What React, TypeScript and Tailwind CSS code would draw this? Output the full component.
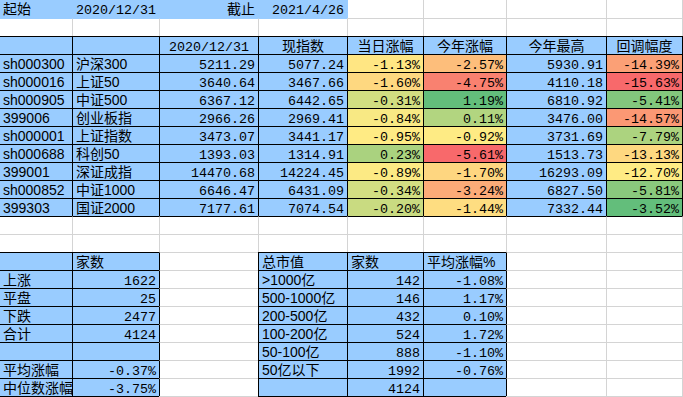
import React from 'react';

type Cell = { t?: string; a?: 'l' | 'r' | 'c'; f?: 'm' | 's'; bg?: string };

const BLUE = 'bg-[#99CCFF]';

const monoCls = "font-['Liberation_Mono','Noto_Sans_CJK_SC',monospace] text-[13.33px] leading-[13px] pt-[4px]";
const sansCls = "font-['Liberation_Sans','Noto_Sans_CJK_SC',sans-serif] text-[14px] leading-[15px] pt-[2px]";

const alignCls = { l: 'text-left', r: 'text-right', c: 'text-center' };

const topCls = {
  k: 'border-t border-t-black',
  g: 'border-t border-t-[#D4D4D4]',
  b: 'border-t border-t-[#99CCFF]',
  n: '',
};
const leftCls = {
  k: 'border-l border-l-black',
  g: 'border-l border-l-[#D4D4D4]',
  b: 'border-l border-l-[#99CCFF]',
  n: '',
};
const rightCls = {
  k: 'border-r border-r-black',
  g: 'border-r border-r-[#D4D4D4]',
  n: '',
};

const s = (t: string, a: 'l' | 'r' | 'c' = 'l', bg?: string): Cell => ({ t, a, f: 's', bg });
const m = (t: string, a: 'l' | 'r' | 'c' = 'r', bg?: string): Cell => ({ t, a, f: 'm', bg });
const e = (bg?: string): Cell => ({ bg });

const data: [string, string, string, string, string, string, string, string, string, string, string][] = [
  ['sh000300', '沪深300', '5211.29', '5077.24', '-1.13%', 'bg-[#FFE683]', '-2.57%', 'bg-[#FDBE7B]', '5930.91', '-14.39%', 'bg-[#FBA076]'],
  ['sh000016', '上证50', '3640.64', '3467.66', '-1.60%', 'bg-[#FED880]', '-4.75%', 'bg-[#F98170]', '4110.18', '-15.63%', 'bg-[#F8696B]'],
  ['sh000905', '中证500', '6367.12', '6442.65', '-0.31%', 'bg-[#D1DE81]', '1.19%', 'bg-[#63BE7B]', '6810.92', '-5.41%', 'bg-[#83C77D]'],
  ['399006', '创业板指', '2966.26', '2969.41', '-0.84%', 'bg-[#F8E984]', '0.11%', 'bg-[#B2D580]', '3476.00', '-14.57%', 'bg-[#FB9874]'],
  ['sh000001', '上证指数', '3473.07', '3441.17', '-0.95%', 'bg-[#FFEB84]', '-0.92%', 'bg-[#FEEB84]', '3731.69', '-7.79%', 'bg-[#ACD37F]'],
  ['sh000688', '科创50', '1393.03', '1314.91', '0.23%', 'bg-[#AAD27F]', '-5.61%', 'bg-[#F8696B]', '1513.73', '-13.13%', 'bg-[#FED880]'],
  ['399001', '深证成指', '14470.68', '14224.45', '-0.89%', 'bg-[#FCEA84]', '-1.70%', 'bg-[#FED680]', '16293.09', '-12.70%', 'bg-[#FFEB84]'],
  ['sh000852', '中证1000', '6646.47', '6431.09', '-0.34%', 'bg-[#D3DE82]', '-3.24%', 'bg-[#FCAB78]', '6827.50', '-5.81%', 'bg-[#8AC97D]'],
  ['399303', '国证2000', '7177.61', '7074.54', '-0.20%', 'bg-[#C9DB81]', '-1.44%', 'bg-[#FEDD81]', '7332.44', '-3.52%', 'bg-[#63BE7B]'],
];

const lower: [Cell, Cell, Cell, Cell, Cell][] = [
  [s('', 'l', BLUE), s('家数', 'l', BLUE), s('总市值', 'l', BLUE), s('家数', 'l', BLUE), s('平均涨幅%', 'l', BLUE)],
  [s('上涨', 'l', BLUE), m('1622', 'r', BLUE), s('>1000亿', 'l', BLUE), m('142', 'r', BLUE), m('-1.08%', 'r', BLUE)],
  [s('平盘', 'l', BLUE), m('25', 'r', BLUE), s('500-1000亿', 'l', BLUE), m('146', 'r', BLUE), m('1.17%', 'r', BLUE)],
  [s('下跌', 'l', BLUE), m('2477', 'r', BLUE), s('200-500亿', 'l', BLUE), m('432', 'r', BLUE), m('0.10%', 'r', BLUE)],
  [s('合计', 'l', BLUE), m('4124', 'r', BLUE), s('100-200亿', 'l', BLUE), m('524', 'r', BLUE), m('1.72%', 'r', BLUE)],
  [e(BLUE), e(BLUE), s('50-100亿', 'l', BLUE), m('888', 'r', BLUE), m('-1.10%', 'r', BLUE)],
  [s('平均涨幅', 'l', BLUE), m('-0.37%', 'r', BLUE), s('50亿以下', 'l', BLUE), m('1992', 'r', BLUE), m('-0.76%', 'r', BLUE)],
  [s('中位数涨幅', 'l', BLUE), m('-3.75%', 'r', BLUE), e(BLUE), m('4124', 'r', BLUE), e(BLUE)],
];

const rows: Cell[][] = [];
rows.push([s('起始', 'l', BLUE), m('2020/12/31', 'r', BLUE), s('截止', 'r', BLUE), m('2021/4/26', 'r', BLUE), e(), e(), e(), e()]);
rows.push([e(), e(), e(), e(), e(), e(), e(), e()]);
rows.push([
  e(BLUE),
  e(BLUE),
  m('2020/12/31', 'c', BLUE),
  s('现指数', 'c', BLUE),
  s('当日涨幅', 'c', BLUE),
  s('今年涨幅', 'c', BLUE),
  s('今年最高', 'c', BLUE),
  s('回调幅度', 'c', BLUE),
]);
for (const d of data) {
  rows.push([
    s(d[0], 'l', BLUE),
    s(d[1], 'l', BLUE),
    m(d[2], 'r', BLUE),
    m(d[3], 'r', BLUE),
    m(d[4], 'r', d[5]),
    m(d[6], 'r', d[7]),
    m(d[8], 'r', BLUE),
    m(d[9], 'r', d[10]),
  ]);
}
rows.push([e(), e(), e(), e(), e(), e(), e(), e()]);
rows.push([e(), e(), e(), e(), e(), e(), e(), e()]);
for (const l of lower) {
  rows.push([l[0], l[1], e(), l[2], l[3], l[4], e(), e()]);
}

const boxed = (r: number, c: number) =>
  (r >= 2 && r <= 11) || (r >= 14 && r <= 21 && [0, 1, 3, 4, 5].includes(c));
const filled = (r: number, c: number) => boxed(r, c) || (r === 0 && c <= 3);

function topKey(r: number, c: number): 'k' | 'g' | 'b' | 'n' {
  if (r === 0) return 'n';
  if (boxed(r - 1, c) || boxed(r, c)) return 'k';
  if (filled(r - 1, c) || filled(r, c)) return 'b';
  return 'g';
}
function leftKey(r: number, c: number): 'k' | 'g' | 'b' | 'n' {
  if (c === 0) return 'n';
  if (boxed(r, c - 1) || boxed(r, c)) return 'k';
  if (filled(r, c - 1) || filled(r, c)) return 'b';
  return 'g';
}
function rightKey(r: number, c: number): 'k' | 'g' | 'n' {
  if (c !== 7) return 'n';
  if (boxed(r, c)) return 'k';
  return 'g';
}

export default function App() {
  return (
    <div className="w-[683px] h-[397px] overflow-hidden bg-white text-black">
      <div className="grid grid-cols-[72px_87px_99px_89px_76px_83px_100px_77px]">
        {rows.map((row, r) =>
          row.map((cell, c) => (
            <div
              key={`${r}-${c}`}
              className={[
                'h-[18px] overflow-hidden whitespace-nowrap px-[3px]',
                cell.bg ?? 'bg-white',
                topCls[topKey(r, c)],
                leftCls[leftKey(r, c)],
                rightCls[rightKey(r, c)],
                cell.f === 'm' ? monoCls : sansCls,
                alignCls[cell.a ?? 'l'],
              ].join(' ')}
            >
              {cell.t}
            </div>
          ))
        )}
        {Array.from({ length: 8 }).map((_, c) => (
          <div
            key={`last-${c}`}
            className={[
              'h-[1px] border-t',
              boxed(21, c) ? 'border-t-black' : 'border-t-[#D4D4D4]',
              c === 7 ? 'border-r border-r-[#D4D4D4]' : '',
            ].join(' ')}
          />
        ))}
      </div>
    </div>
  );
}
